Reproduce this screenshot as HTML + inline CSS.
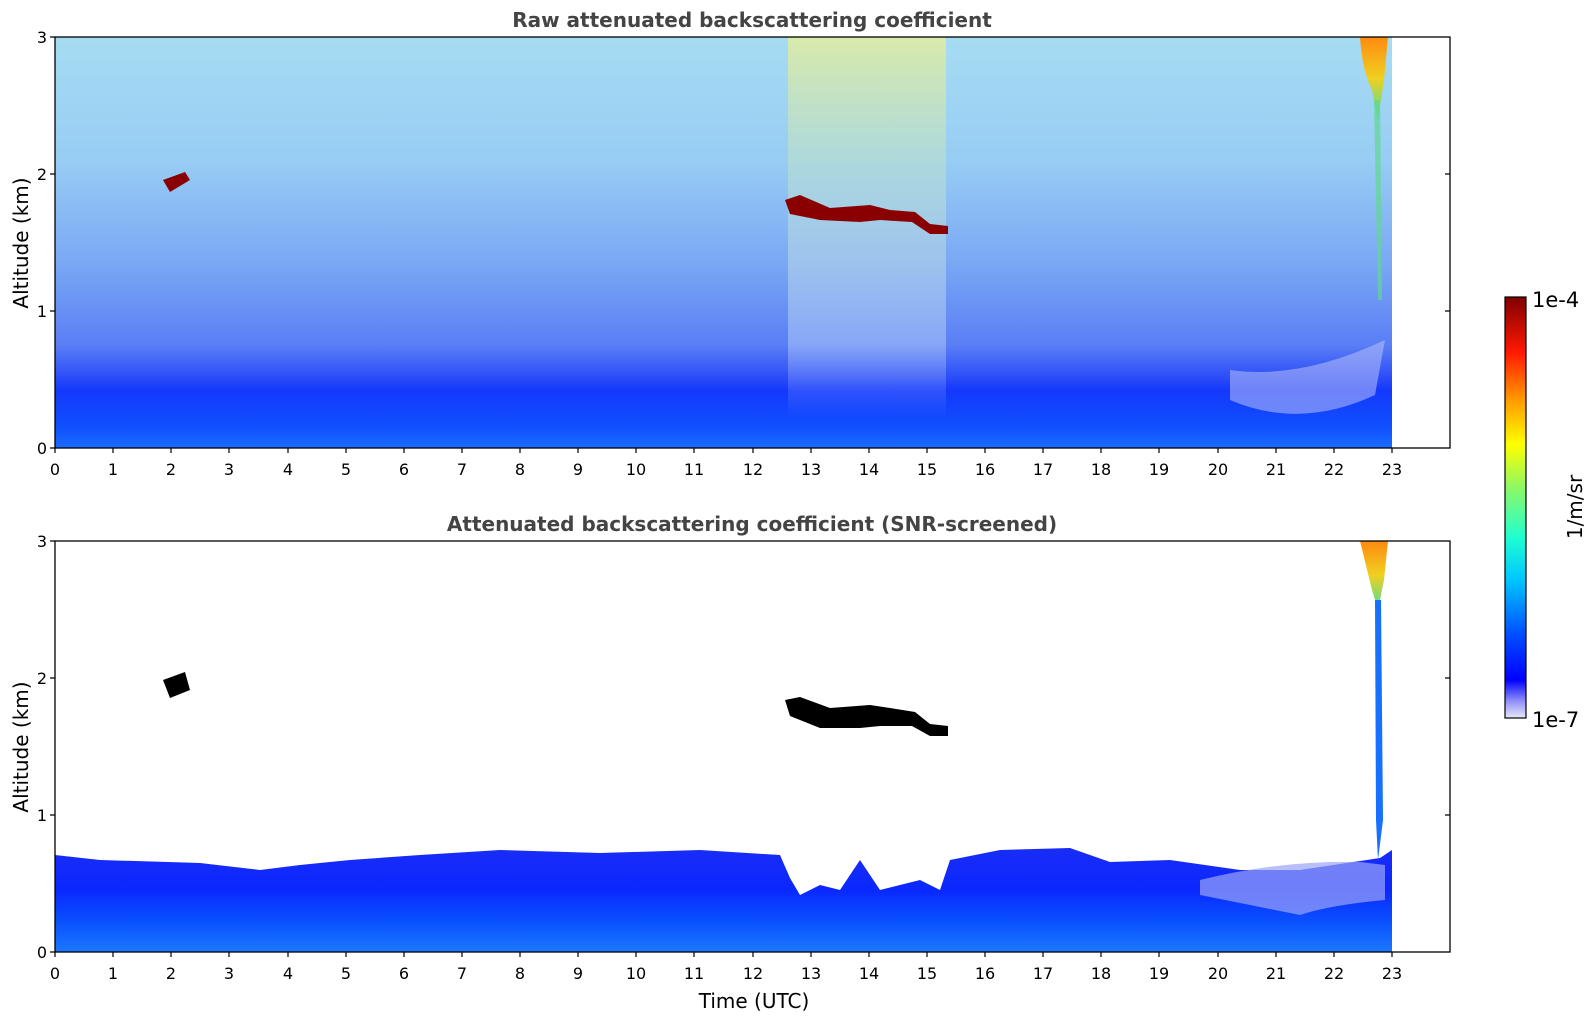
<!DOCTYPE html>
<html><head><meta charset="utf-8"><style>body{margin:0;background:#fff}svg{display:block}text{font-family:"DejaVu Sans","Liberation Sans",sans-serif}</style></head>
<body>
<svg width="1595" height="1020" viewBox="0 0 1595 1020" xmlns="http://www.w3.org/2000/svg">
<defs>
<linearGradient id="top" x1="0" y1="0" x2="0" y2="1">
<stop offset="0" stop-color="#a6dcf2"/>
<stop offset="0.3" stop-color="#98cdf4"/>
<stop offset="0.55" stop-color="#7aa8f4"/>
<stop offset="0.75" stop-color="#5a7ef6"/>
<stop offset="0.83" stop-color="#2a4cf8"/>
<stop offset="0.86" stop-color="#1438fc"/>
<stop offset="0.95" stop-color="#1050ff"/>
<stop offset="1" stop-color="#1a6cff"/>
</linearGradient>
<linearGradient id="mid" x1="0" y1="0" x2="0" y2="1">
<stop offset="0" stop-color="#e6ee98" stop-opacity="0.8"/>
<stop offset="0.35" stop-color="#b8e0d0" stop-opacity="0.6"/>
<stop offset="0.8" stop-color="#c0d8f8" stop-opacity="0.45"/>
<stop offset="1" stop-color="#c0d8f8" stop-opacity="0"/>
</linearGradient>
<linearGradient id="band" x1="0" y1="0" x2="0" y2="1">
<stop offset="0" stop-color="#1a2cf6"/>
<stop offset="0.4" stop-color="#0a28ff"/>
<stop offset="0.7" stop-color="#0a50ff"/>
<stop offset="1" stop-color="#1a78ff"/>
</linearGradient>
<linearGradient id="plume" x1="0" y1="0" x2="0" y2="1">
<stop offset="0" stop-color="#ff8a10"/>
<stop offset="0.5" stop-color="#f0d020"/>
<stop offset="1" stop-color="#40e0a0"/>
</linearGradient>
<linearGradient id="cb" x1="0" y1="1" x2="0" y2="0">
<stop offset="0" stop-color="#e8e8fa"/>
<stop offset="0.04" stop-color="#9090f8"/>
<stop offset="0.09" stop-color="#0000ff"/>
<stop offset="0.2" stop-color="#0050ff"/>
<stop offset="0.33" stop-color="#00c8ff"/>
<stop offset="0.43" stop-color="#20ffd0"/>
<stop offset="0.55" stop-color="#90f860"/>
<stop offset="0.65" stop-color="#ffff00"/>
<stop offset="0.75" stop-color="#ffa000"/>
<stop offset="0.87" stop-color="#ff1800"/>
<stop offset="1" stop-color="#800000"/>
</linearGradient>
</defs>

<!-- TOP PLOT -->
<text x="752" y="27" text-anchor="middle" font-size="20" font-weight="bold" fill="#444">Raw attenuated backscattering coefficient</text>
<rect x="55" y="37" width="1337" height="411" fill="url(#top)"/>
<rect x="788" y="37" width="158" height="380" fill="url(#mid)"/>
<path d="M1230 400 Q1300 430 1375 395 L1385 340 Q1300 380 1230 370Z" fill="#b8c0f8" opacity="0.55"/>
<!-- clouds top -->
<path d="M163 180 L185 172 L190 180 L170 192Z" fill="#8a0000"/>
<path d="M785 200 L800 195 L830 208 L870 205 L890 210 L915 212 L930 224 L948 226 L948 234 L930 234 L912 222 L880 220 L860 222 L820 220 L790 214Z" fill="#8a0000"/>
<path d="M1360 37 L1388 37 L1384 80 L1378 120 L1372 90 Q1362 70 1360 37Z" fill="url(#plume)"/>
<path d="M1374 100 L1380 100 L1382 300 L1378 300Z" fill="#60d890" opacity="0.7"/>
<rect x="55" y="37" width="1395" height="411" fill="none" stroke="#000" stroke-width="1.3"/>

<!-- BOTTOM PLOT -->
<text x="752" y="531" text-anchor="middle" font-size="20" font-weight="bold" fill="#444">Attenuated backscattering coefficient (SNR-screened)</text>
<path d="M55 952 L55 855 L100 860 L200 863 L260 870 L300 865 L350 860 L420 855 L500 850 L600 853 L700 850 L780 855 L790 878 L800 895 L820 885 L840 890 L860 860 L880 890 L900 885 L920 880 L940 890 L950 860 L1000 850 L1070 848 L1110 862 L1170 860 L1240 870 L1300 870 L1380 858 L1392 850 L1392 952Z" fill="url(#band)"/>
<path d="M1200 880 Q1280 860 1360 862 L1385 865 L1385 900 Q1330 905 1300 915 Q1250 905 1200 895Z" fill="#9aa4f6" opacity="0.7"/>
<path d="M1360 541 L1388 541 L1384 580 L1378 610 L1372 590Z" fill="url(#plume)"/>
<path d="M1375 600 L1381 600 L1383 820 L1378 860 L1376 820Z" fill="#1870ff"/>
<!-- black clouds -->
<path d="M163 680 L185 672 L190 690 L170 698Z" fill="#000"/>
<path d="M785 700 L800 697 L830 708 L870 705 L890 708 L915 712 L930 724 L948 726 L948 736 L930 736 L912 726 L880 726 L860 728 L820 728 L790 716Z" fill="#000"/>
<rect x="55" y="541" width="1395" height="411" fill="none" stroke="#000" stroke-width="1.3"/>

<!-- axes ticks/labels -->
<g font-size="16" fill="#000" text-anchor="middle">
<text x="55" y="475">0</text><text x="113" y="475">1</text><text x="171" y="475">2</text><text x="229" y="475">3</text><text x="288" y="475">4</text><text x="346" y="475">5</text><text x="404" y="475">6</text><text x="462" y="475">7</text><text x="520" y="475">8</text><text x="578" y="475">9</text><text x="636" y="475">10</text><text x="694" y="475">11</text><text x="753" y="475">12</text><text x="811" y="475">13</text><text x="869" y="475">14</text><text x="927" y="475">15</text><text x="985" y="475">16</text><text x="1043" y="475">17</text><text x="1101" y="475">18</text><text x="1159" y="475">19</text><text x="1218" y="475">20</text><text x="1276" y="475">21</text><text x="1334" y="475">22</text><text x="1392" y="475">23</text>
</g>
<g font-size="16" fill="#000" text-anchor="middle">
<text x="55" y="979">0</text><text x="113" y="979">1</text><text x="171" y="979">2</text><text x="229" y="979">3</text><text x="288" y="979">4</text><text x="346" y="979">5</text><text x="404" y="979">6</text><text x="462" y="979">7</text><text x="520" y="979">8</text><text x="578" y="979">9</text><text x="636" y="979">10</text><text x="694" y="979">11</text><text x="753" y="979">12</text><text x="811" y="979">13</text><text x="869" y="979">14</text><text x="927" y="979">15</text><text x="985" y="979">16</text><text x="1043" y="979">17</text><text x="1101" y="979">18</text><text x="1159" y="979">19</text><text x="1218" y="979">20</text><text x="1276" y="979">21</text><text x="1334" y="979">22</text><text x="1392" y="979">23</text>
</g>
<g stroke="#000" stroke-width="1.2">
<path d="M55 448v5M113 448v5M171 448v5M229 448v5M288 448v5M346 448v5M404 448v5M462 448v5M520 448v5M578 448v5M636 448v5M694 448v5M753 448v5M811 448v5M869 448v5M927 448v5M985 448v5M1043 448v5M1101 448v5M1159 448v5M1218 448v5M1276 448v5M1334 448v5M1392 448v5"/>
<path d="M55 952v5M113 952v5M171 952v5M229 952v5M288 952v5M346 952v5M404 952v5M462 952v5M520 952v5M578 952v5M636 952v5M694 952v5M753 952v5M811 952v5M869 952v5M927 952v5M985 952v5M1043 952v5M1101 952v5M1159 952v5M1218 952v5M1276 952v5M1334 952v5M1392 952v5"/>
<path d="M50 448h5M50 311h5M50 174h5M50 37h5M50 952h5M50 815h5M50 678h5M50 541h5"/>
<path d="M1450 311h-5M1450 174h-5M1450 815h-5M1450 678h-5"/>
</g>
<g font-size="16" fill="#000" text-anchor="end">
<text x="47" y="454">0</text><text x="47" y="317">1</text><text x="47" y="180">2</text><text x="47" y="43">3</text>
<text x="47" y="958">0</text><text x="47" y="821">1</text><text x="47" y="684">2</text><text x="47" y="547">3</text>
</g>
<text transform="translate(28 243) rotate(-90)" text-anchor="middle" font-size="20">Altitude (km)</text>
<text transform="translate(28 747) rotate(-90)" text-anchor="middle" font-size="20">Altitude (km)</text>
<text x="754" y="1008" text-anchor="middle" font-size="20">Time (UTC)</text>

<!-- colorbar -->
<rect x="1505" y="297" width="21" height="421" fill="url(#cb)" stroke="#000" stroke-width="1.2"/>
<text x="1532" y="307" font-size="21">1e-4</text>
<text x="1532" y="727" font-size="21">1e-7</text>
<text transform="translate(1582 507) rotate(-90)" text-anchor="middle" font-size="20">1/m/sr</text>
</svg>
</body></html>
